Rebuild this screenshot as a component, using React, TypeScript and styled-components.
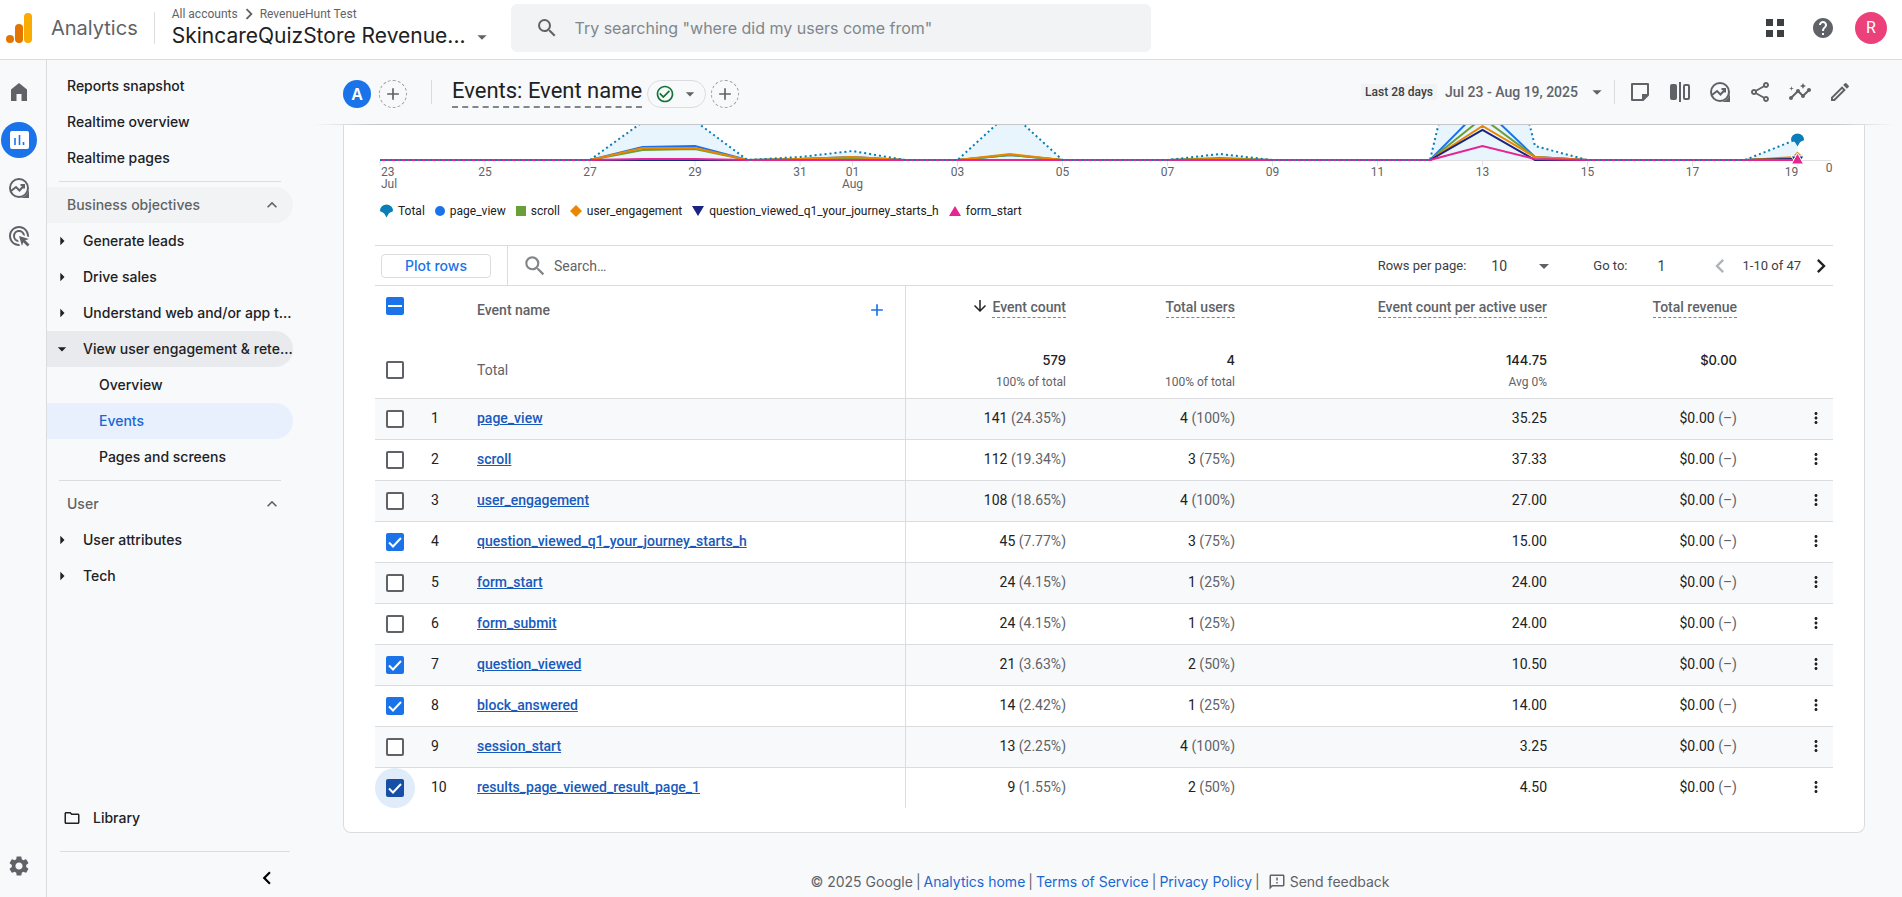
import React, { useId, useState } from 'react';
import styled, { createGlobalStyle, css } from 'styled-components';
import {
  MdAdd,
  MdAdsClick,
  MdArrowDownward,
  MdArrowDropDown,
  MdArrowRight,
  MdCheckCircleOutline,
  MdChevronLeft,
  MdChevronRight,
  MdExpandLess,
  MdHelp,
  MdInsights,
  MdMoreVert,
  MdOutlineFeedback,
  MdOutlineFolder,
  MdOutlineModeEdit,
  MdOutlineShare,
  MdSearch,
  MdSettings,
} from 'react-icons/md';

const ink = '#202124';
const grey = '#5f6368';
const line = '#dadce0';
const blue = '#1a73e8';
const surface = '#f8f9fb';
const display = `Inter, "Liberation Sans", sans-serif`;

const GlobalStyle = createGlobalStyle`
  *, *::before, *::after { box-sizing: border-box; }
  body {
    margin: 0;
    background: ${surface};
    color: ${ink};
    font: 400 14px/20px Roboto, "Liberation Sans", sans-serif;
  }
  button, input, select { font: inherit; color: inherit; }
  svg { display: block; flex: none; }
`;

const plainButton = css`
  display: flex;
  align-items: center;
  padding: 0;
  border: 0;
  background: none;
  cursor: pointer;
`;

/* ---------- Top bar ---------- */

const TopBar = styled.header`
  display: flex;
  align-items: center;
  height: 60px;
  padding: 0 15px 4px 6px;
  background: #fff;
  border-bottom: 1px solid ${line};
`;

const ProductName = styled.span`
  margin: 0 16px 0 19px;
  color: ${grey};
  font: 400 20px/28px ${display};
`;

const Rule = styled.span`
  flex: none;
  width: 1px;
  height: ${(p: { $tall?: boolean }) => (p.$tall ? '32px' : '24px')};
  background: ${line};
`;

const AccountPicker = styled.button`
  ${plainButton}
  flex: none;
  gap: 6px;
  margin: 0 18px 0 17px;
  text-align: left;
`;

const AccountText = styled.span`
  display: flex;
  flex-direction: column;
`;

const Crumbs = styled.span`
  display: flex;
  align-items: center;
  height: 16px;
  color: ${grey};
  font-size: 12px;
  line-height: 16px;
`;

const AccountName = styled.span`
  font: 400 21px/28px ${display};
  white-space: nowrap;
`;

const CaretSlot = styled.span`
  align-self: flex-end;
  padding-bottom: 2px;
  color: ${grey};
`;

const GlobalSearch = styled.label`
  display: flex;
  flex: 0 1 640px;
  align-items: center;
  gap: 15px;
  height: 48px;
  padding: 0 24px;
  border-radius: 6px;
  background: #f1f3f4;
  color: ${grey};
`;

const SearchInput = styled.input`
  flex: 1;
  min-width: 0;
  padding: 0;
  border: 0;
  outline: 0;
  background: none;
  font: 400 16px/24px ${display};
  &::placeholder { color: #80868b; opacity: 1; }
`;

const TopActions = styled.div`
  display: flex;
  align-items: center;
  gap: 24px;
  margin-left: auto;
  color: ${grey};
`;

const IconButton = styled.button`
  ${plainButton}
  justify-content: center;
  min-width: 24px;
  height: 24px;
  color: ${grey};
`;

const Avatar = styled.button`
  ${plainButton}
  justify-content: center;
  width: 32px;
  height: 32px;
  margin-left: -4px;
  border-radius: 50%;
  background: #ec407a;
  color: #fff;
  font-size: 16px;
`;

/* ---------- Shell ---------- */

const Shell = styled.div`
  display: flex;
  min-height: calc(100vh - 60px);
`;

const Rail = styled.nav`
  display: flex;
  flex: none;
  flex-direction: column;
  align-items: center;
  gap: 12px;
  width: 47px;
  padding: 14px 8px 13px 0;
  border-right: 1px solid ${line};
`;

const RailLink = styled.a<{ $active?: boolean; $last?: boolean }>`
  display: flex;
  align-items: center;
  justify-content: center;
  width: 36px;
  height: 36px;
  margin-top: ${(p) => (p.$last ? 'auto' : '0')};
  border-radius: 50%;
  background: ${(p) => (p.$active ? blue : 'transparent')};
  color: ${grey};
`;

const SideNav = styled.nav`
  display: flex;
  flex: none;
  flex-direction: column;
  width: 266px;
  padding: 8px 20px 7px 0;
  font-family: ${display};
  font-weight: 450;
`;

const NavLink = styled.a<{ $level: number; $tone?: 'open' | 'selected' }>`
  display: flex;
  align-items: center;
  height: 36px;
  padding-left: ${(p) => [20, 5, 52][p.$level]}px;
  border-radius: 0 18px 18px 0;
  background: ${(p) => (p.$tone === 'open' ? '#e8eaed' : p.$tone === 'selected' ? '#e8f0fe' : 'transparent')};
  color: ${(p) => (p.$tone === 'selected' ? '#1967d2' : ink)};
  text-decoration: none;
  white-space: nowrap;
  & > svg { margin-right: 11px; }
`;

const NavSection = styled.button<{ $hover?: boolean }>`
  ${plainButton}
  justify-content: space-between;
  height: 36px;
  padding: 0 11px 0 20px;
  border-radius: 0 18px 18px 0;
  background: ${(p) => (p.$hover ? '#f1f3f4' : 'transparent')};
  color: ${grey};
  font-weight: 450;
`;

const NavRule = styled.hr`
  width: 222px;
  height: 1px;
  margin: 5px 0 5px 12px;
  border: 0;
  background: ${line};
`;

const LibraryLink = styled.a`
  display: flex;
  align-items: center;
  gap: 12px;
  height: 36px;
  margin-top: auto;
  padding-left: 16px;
  color: ${ink};
  text-decoration: none;
`;

const BottomRule = styled.hr`
  width: 230px;
  height: 1px;
  margin: 15px 0 14px 13px;
  border: 0;
  background: ${line};
`;

const CollapseButton = styled(IconButton)`
  align-self: flex-end;
  margin-right: 13px;
  color: #000;
`;

const Main = styled.main`
  flex: 1;
  min-width: 0;
`;

/* ---------- Report header ---------- */

const ReportHeader = styled.div`
  display: flex;
  align-items: flex-start;
  height: 64px;
  padding: 20px 50px 0 30px;
`;

const HeaderEdge = styled.div`
  height: 1px;
  margin-right: 7px;
  background: linear-gradient(to right, transparent, #c4c6c9 60px, #c4c6c9 calc(100% - 60px), transparent);
`;

const Segment = styled.button`
  ${plainButton}
  justify-content: center;
  width: 28px;
  height: 28px;
  border-radius: 50%;
  background: ${blue};
  color: #fff;
  font: 600 16px/28px ${display};
`;

const AddButton = styled.button`
  ${plainButton}
  flex: none;
  justify-content: center;
  width: 28px;
  height: 28px;
  border: 1px dashed #9aa0a6;
  border-radius: 50%;
  color: ${grey};
`;

const SegmentGroup = styled.div`
  display: flex;
  gap: 8px;
  margin-right: 24px;
`;

const ReportTitle = styled.h1`
  margin: 0 5px 0 20px;
  padding-bottom: 4px;
  border-bottom: 2px dashed #80868b;
  font-size: 22px;
  font-weight: 400;
  line-height: 22px;
  white-space: nowrap;
`;

const StatusPill = styled.button`
  ${plainButton}
  gap: 5px;
  width: 59px;
  height: 28px;
  margin-right: 5px;
  padding-left: 7px;
  border: 1px solid ${line};
  border-radius: 14px;
  color: ${grey};
`;

const ReportTools = styled.div`
  display: flex;
  align-items: center;
  gap: 16px;
  height: 24px;
  margin-left: auto;
`;

const DatePicker = styled.button`
  ${plainButton}
  gap: 8px;
  margin-right: -10px;
  color: ${grey};
  font-weight: 500;
`;

const DatePreset = styled.span`
  padding: 0 4px;
  background: #f1f3f4;
  color: #3c4043;
  font-size: 12px;
  line-height: 16px;
`;

const ToolRule = styled(Rule)`
  margin-right: -3px;
`;

/* ---------- Card, chart, legend ---------- */

const Card = styled.section`
  margin: 0 37px 0 30px;
  padding: 0 31px 24px;
  border: 1px solid ${line};
  border-top: 0;
  border-radius: 0 0 8px 8px;
  background: #fff;
`;

const ChartSvg = styled.svg`
  width: 100%;
  height: auto;
  font-size: 12px;
`;

const Legend = styled.ul`
  display: flex;
  flex-wrap: wrap;
  gap: 4px 10px;
  margin: 11px 0 26px 5px;
  padding: 0;
  list-style: none;
  font-size: 12px;
  line-height: 16px;
`;

const LegendItem = styled.li`
  display: flex;
  align-items: center;
  gap: 5px;
`;

/* ---------- Table ---------- */

const TableBar = styled.div`
  display: flex;
  align-items: center;
  height: 41px;
  border-top: 1px solid ${line};
  border-bottom: 1px solid ${line};
`;

const PlotButton = styled.button`
  width: 110px;
  height: 24px;
  margin: 0 16px 0 6px;
  padding: 0;
  border: 1px solid ${line};
  border-radius: 4px;
  background: #fff;
  color: ${blue};
  font: 500 14px/22px ${display};
  cursor: pointer;
`;

const BarRule = styled.span`
  width: 1px;
  height: 39px;
  background: ${line};
`;

const TableSearch = styled.label`
  display: flex;
  flex: 1;
  align-items: center;
  gap: 6px;
  padding-left: 14px;
  color: #80868b;
`;

const TableSearchInput = styled(SearchInput)`
  font: 400 14px/20px Roboto, "Liberation Sans", sans-serif;
  &::placeholder { color: ${grey}; }
`;

const PagerLabel = styled.label`
  display: flex;
  align-items: center;
  color: #3c4043;
  font-size: 13px;
`;

const SelectWrap = styled.span`
  display: flex;
  align-items: center;
  margin: 0 37px 0 25px;
  color: ${grey};
`;

const PageSize = styled.select`
  width: 41px;
  padding: 0;
  border: 0;
  background: none;
  color: #3c4043;
  font-size: 14px;
  appearance: none;
`;

const GoToInput = styled.input`
  width: 49px;
  margin-left: 30px;
  padding: 0;
  border: 0;
  background: none;
  font-size: 14px;
`;

const PagerRange = styled.span`
  margin: 0 6px 0 8px;
  color: #3c4043;
  font-size: 13px;
`;

const PagerButton = styled(IconButton)<{ $off?: boolean }>`
  color: ${(p) => (p.$off ? '#b0b3b8' : ink)};
  &:last-child { margin-right: -2px; }
`;

const Table = styled.table`
  width: 100%;
  border-spacing: 0;
  table-layout: fixed;
`;

const HeadRow = styled.tr`
  height: 56px;
`;

const HeadCell = styled.th<{ $low?: boolean; $edge?: boolean }>`
  padding: ${(p) => (p.$low ? '14px' : '11px')} 0 0;
  border-right: ${(p) => (p.$edge ? `1px solid ${line}` : '0')};
  color: ${grey};
  font-weight: 500;
  text-align: left;
  vertical-align: top;
`;

const DimensionHead = styled.div`
  display: flex;
  justify-content: space-between;
  padding-right: 16px;
  & button { height: 20px; color: ${blue}; }
`;

const MetricHead = styled.div`
  display: flex;
  justify-content: flex-end;
  gap: 3px;
`;

const MetricButton = styled.button`
  ${plainButton}
  border-bottom: 1px dashed #80868b;
  font-weight: 500;
  white-space: nowrap;
`;

const TotalRow = styled.tr`
  height: 56px;
`;

const TotalCell = styled.td`
  padding: 8px 0 0;
  font: 500 13px/20px ${display};
  text-align: right;
  vertical-align: top;
`;

const TotalNote = styled.div`
  color: ${grey};
  font: 400 12px/24px Roboto, "Liberation Sans", sans-serif;
`;

const BodyRow = styled.tr<{ $shaded: boolean }>`
  height: 41px;
  background: ${(p) => (p.$shaded ? surface : '#fff')};
  & > td { border-top: 1px solid ${line}; }
  & > td + td { padding-bottom: 2px; }
`;

const Cell = styled.td<{ $right?: boolean; $edge?: boolean }>`
  padding: 0;
  border-right: ${(p) => (p.$edge ? `1px solid ${line}` : '0')};
  text-align: ${(p) => (p.$right ? 'right' : 'left')};
  white-space: nowrap;
`;

const Muted = styled.span`
  color: ${grey};
`;

const EventLink = styled.a`
  color: #185abc;
  font-weight: 500;
  text-decoration: underline;
`;

const MenuButton = styled(IconButton)`
  margin-left: 67px;
  color: ${ink};
`;

const CheckWrap = styled.label<{ $focus?: boolean }>`
  position: relative;
  display: block;
  width: 18px;
  height: 18px;
  margin-left: 11px;
  color: #fff;
  &::before {
    content: '';
    position: absolute;
    inset: -11px;
    border-radius: 50%;
    background: ${(p) => (p.$focus ? '#e1ecfb' : 'transparent')};
  }
  & > svg { position: absolute; inset: 0; pointer-events: none; }
`;

const CheckInput = styled.input<{ $fill: boolean; $focus?: boolean }>`
  position: relative;
  display: block;
  width: 18px;
  height: 18px;
  margin: 0;
  border: ${(p) => (p.$fill ? '0' : `2px solid ${grey}`)};
  border-radius: 2px;
  background: ${(p) => (p.$fill ? (p.$focus ? '#174ea6' : blue) : '#fff')};
  appearance: none;
`;

const Footer = styled.footer`
  display: flex;
  align-items: center;
  justify-content: center;
  gap: 3px;
  padding: 39px 45px 5px 30px;
  color: ${grey};
  font: 400 14px/20px ${display};
`;

const FooterLink = styled.a`
  color: #1967d2;
  text-decoration: none;
`;

const FeedbackButton = styled.button`
  ${plainButton}
  gap: 4px;
  margin-left: 5px;
  color: ${grey};
`;

/* ---------- Icons ---------- */

const AnalyticsLogo = () => (
  <svg width="26" height="30" viewBox="0 0 26 30" aria-hidden="true">
    <rect x="18" y="0" width="8" height="30" rx="4" fill="#f9ab00" />
    <rect x="9" y="11" width="8" height="19" rx="4" fill="#e37400" />
    <circle cx="4" cy="26" r="4" fill="#e37400" />
  </svg>
);

const HomeIcon = () => (
  <svg width="24" height="24" viewBox="0 0 24 24" aria-hidden="true">
    <path d="M4 21V9.5L12 3l8 6.500V21h-5.500v-7h-5v7z" fill="currentColor" />
  </svg>
);

const ReportsIcon = () => (
  <svg width="24" height="24" viewBox="0 0 24 24" aria-hidden="true">
    <rect x="3" y="3" width="19" height="18" rx="2" fill="#fff" />
    <path d="M8 10v7M12.500 7v10M16.500 14v3" stroke={blue} strokeWidth="1.600" />
  </svg>
);

const ExploreIcon = () => (
  <svg width="24" height="24" viewBox="0 0 24 24" fill="none" stroke="currentColor" strokeWidth="2" aria-hidden="true">
    <circle cx="12" cy="12" r="9" />
    <path d="M22 12v10H12c5.500 0 10-4.500 10-10z" fill="currentColor" stroke="none" />
    <path d="M4 15l5-4 3.500 3.500L17 9.500M13.500 9H17v3.500" />
  </svg>
);

const AppsIcon = () => (
  <svg width="24" height="24" viewBox="0 0 24 24" fill="#3c4043" aria-hidden="true">
    <path d="M3 3h7v7H3zM14 3h7v7h-7zM3 14h7v7H3zM14 14h7v7h-7z" />
  </svg>
);

const NoteIcon = () => (
  <svg width="24" height="24" viewBox="0 0 24 24" aria-hidden="true">
    <path d="M4 4h16v11l-5 5H4z" fill="none" stroke="currentColor" strokeWidth="2" strokeLinejoin="round" />
    <path d="M14 21v-7h7z" fill="currentColor" />
  </svg>
);

const CompareIcon = () => (
  <svg width="24" height="24" viewBox="0 0 24 24" aria-hidden="true">
    <rect x="2" y="4" width="7" height="16" rx="2" fill="currentColor" />
    <path d="M12 2v20" stroke="currentColor" strokeWidth="2" />
    <rect x="16" y="5" width="5" height="14" rx="1" fill="none" stroke="currentColor" strokeWidth="2" />
  </svg>
);

const CheckMark = () => (
  <svg width="18" height="18" viewBox="0 0 18 18" aria-hidden="true">
    <path d="M3 9.500l4 4L15 5" fill="none" stroke="currentColor" strokeWidth="2" />
  </svg>
);

const DashMark = () => (
  <svg width="18" height="18" viewBox="0 0 18 18" aria-hidden="true">
    <path d="M2 9h14" stroke="currentColor" strokeWidth="2" />
  </svg>
);

const totalShape = 'M0 6.500A6.500 6 0 0 1 13 6.500C13 8.500 10 7.500 8.500 10L6.500 13.500L4.500 10C3 7.500 0 8.500 0 6.500z';

type Marker = 'total' | 'circle' | 'square' | 'diamond' | 'down' | 'up';

const LegendMarker = ({ kind }: { kind: Marker }) => (
  <svg width={{ total: 13, circle: 10, square: 10, diamond: 12, down: 12, up: 12 }[kind]} height="14" aria-hidden="true">
    {kind === 'total' && <path d={totalShape} fill="#0b7db8" />}
    {kind === 'circle' && <circle cx="5" cy="7" r="5" fill={blue} />}
    {kind === 'square' && <rect y="2" width="10" height="10" fill="#689f38" />}
    {kind === 'diamond' && <path d="M6 1l6 6-6 6-6-6z" fill="#ea8600" />}
    {kind === 'down' && <path d="M0 2h12L6 12z" fill="#1a237e" />}
    {kind === 'up' && <path d="M6 2l6 10H0z" fill="#e52592" />}
  </svg>
);

/* ---------- Data ---------- */

const DAY = 52.5;
const START = 5;
const BASE = 35;

/* Heights above the zero line, keyed by days since Jul 23. */
const series: { color: string; points: Record<number, number> }[] = [
  { color: blue, points: { 5: 13, 6: 14, 8: 1, 9: 3, 12: 5, 16: 1, 21: 53, 22: 3, 27: 2 } },
  { color: '#689f38', points: { 5: 10, 6: 11, 8: 1, 9: 2, 12: 5, 16: 2, 21: 42, 22: 3, 27: 2 } },
  { color: '#ea8600', points: { 5: 12, 6: 12, 8: 1, 9: 3, 12: 6, 16: 1, 21: 34, 22: 3, 27: 3 } },
  { color: '#1a237e', points: { 21: 30, 27: 1 } },
  { color: '#e52592', points: { 5: 1, 6: 1, 21: 14, 22: 1 } },
];
const totals: Record<number, number> = { 5: 38, 6: 39, 8: 3, 9: 9, 12: 48, 16: 6, 21: 220, 22: 14, 27: 21 };

const toPoints = (p: Record<number, number>) =>
  Array.from({ length: 28 }, (_, i) => `${START + i * DAY},${BASE - (p[i] ?? 0)}`).join(' ');

const ticks: [number, string, string?][] = [
  [0, '23', 'Jul'], [2, '25'], [4, '27'], [6, '29'], [8, '31'], [9, '01', 'Aug'], [11, '03'], [13, '05'],
  [15, '07'], [17, '09'], [19, '11'], [21, '13'], [23, '15'], [25, '17'], [27, '19'],
];

const legend: [Marker, string][] = [
  ['total', 'Total'],
  ['circle', 'page_view'],
  ['square', 'scroll'],
  ['diamond', 'user_engagement'],
  ['down', 'question_viewed_q1_your_journey_starts_h'],
  ['up', 'form_start'],
];

const rows: [string, string, string, string, string, string][] = [
  ['page_view', '141', '24.35%', '4', '100%', '35.25'],
  ['scroll', '112', '19.34%', '3', '75%', '37.33'],
  ['user_engagement', '108', '18.65%', '4', '100%', '27.00'],
  ['question_viewed_q1_your_journey_starts_h', '45', '7.77%', '3', '75%', '15.00'],
  ['form_start', '24', '4.15%', '1', '25%', '24.00'],
  ['form_submit', '24', '4.15%', '1', '25%', '24.00'],
  ['question_viewed', '21', '3.63%', '2', '50%', '10.50'],
  ['block_answered', '14', '2.42%', '1', '25%', '14.00'],
  ['session_start', '13', '2.25%', '4', '100%', '3.25'],
  ['results_page_viewed_result_page_1', '9', '1.55%', '2', '50%', '4.50'],
];

const columnWidths = [56, 46, 429, 160, 169, 312, 190, 96];

/* ---------- Pieces ---------- */

const Checkbox = (p: { label: string; on?: boolean; mixed?: boolean; focus?: boolean; onToggle?: () => void }) => (
  <CheckWrap $focus={p.focus}>
    <CheckInput
      type="checkbox"
      aria-label={p.label}
      checked={!!p.on}
      onChange={() => p.onToggle?.()}
      $fill={!!(p.on || p.mixed)}
      $focus={p.focus}
    />
    {p.mixed ? <DashMark /> : p.on ? <CheckMark /> : null}
  </CheckWrap>
);

const TrendChart = () => (
  <ChartSvg viewBox="0 0 1458 67" role="img" aria-label="Event count by event name over time">
    <path d="M5 35.500H1456" stroke="#e0e0e0" />
    <polygon points={`${START},${BASE} ${toPoints(totals)} ${START + 27 * DAY},${BASE}`} fill="#e8f5fd" />
    {ticks.map(([day]) => (
      <path key={day} d={`M${START + day * DAY} 36v5`} stroke="#e0e0e0" />
    ))}
    {series.map((s) => (
      <polyline key={s.color} points={toPoints(s.points)} fill="none" stroke={s.color} strokeWidth="2" />
    ))}
    <polyline points={toPoints(totals)} fill="none" stroke="#0b7db8" strokeWidth="2" strokeDasharray="2 3" />
    <g transform="translate(1416 8)"><path d={totalShape} fill="#0b7db8" /></g>
    <path d="M1422.500 26l6 6-6 6-6-6z" fill="#ea8600" stroke="#fff" />
    <path d="M1416 31h13l-6.500 9z" fill="#1a237e" stroke="#fff" />
    <path d="M1422.500 28l6 11h-12z" fill="#e52592" stroke="#fff" />
    <g fill={grey} textAnchor="middle">
      {ticks.map(([day, label, month]) => {
        const x = day === 0 ? START + 1 : START + day * DAY - (day === 27 ? 6 : 0);
        return (
          <text key={day} x={x} y="51" textAnchor={day === 0 ? 'start' : 'middle'}>
            {label}
            {month && <tspan x={x} y="63">{month}</tspan>}
          </text>
        );
      })}
      <text x="1454" y="47">0</text>
    </g>
  </ChartSvg>
);

const NavCaret = ({ open }: { open?: boolean }) => (open ? <MdArrowDropDown size={20} /> : <MdArrowRight size={20} />);

export default function App() {
  const [checked, setChecked] = useState<number[]>([3, 6, 7, 9]);
  const [goTo, setGoTo] = useState('1');
  const sizeId = useId();
  const toggle = (i: number) =>
    setChecked((c) => (c.includes(i) ? c.filter((n) => n !== i) : [...c, i]));

  return (
    <>
      <GlobalStyle />
      <TopBar>
        <AnalyticsLogo />
        <ProductName>Analytics</ProductName>
        <Rule $tall />
        <AccountPicker>
          <AccountText>
            <Crumbs>
              All accounts <MdChevronRight size={22} /> RevenueHunt Test
            </Crumbs>
            <AccountName>SkincareQuizStore Revenue...</AccountName>
          </AccountText>
          <CaretSlot><MdArrowDropDown size={22} /></CaretSlot>
        </AccountPicker>
        <GlobalSearch>
          <MdSearch size={24} />
          <SearchInput
            type="text"
            aria-label="Search Analytics"
            placeholder={'Try searching "where did my users come from"'}
          />
        </GlobalSearch>
        <TopActions>
          <IconButton aria-label="Apps"><AppsIcon /></IconButton>
          <IconButton aria-label="Help"><MdHelp size={24} /></IconButton>
          <Avatar aria-label="Account">R</Avatar>
        </TopActions>
      </TopBar>

      <Shell>
        <Rail aria-label="Product areas">
          <RailLink href="#home" aria-label="Home"><HomeIcon /></RailLink>
          <RailLink href="#reports" aria-label="Reports" $active><ReportsIcon /></RailLink>
          <RailLink href="#explore" aria-label="Explore"><ExploreIcon /></RailLink>
          <RailLink href="#advertising" aria-label="Advertising"><MdAdsClick size={24} /></RailLink>
          <RailLink href="#admin" aria-label="Admin" $last><MdSettings size={24} /></RailLink>
        </Rail>

        <SideNav aria-label="Reports">
          <NavLink href="#snapshot" $level={0}>Reports snapshot</NavLink>
          <NavLink href="#realtime" $level={0}>Realtime overview</NavLink>
          <NavLink href="#realtime-pages" $level={0}>Realtime pages</NavLink>
          <NavRule />
          <NavSection $hover>Business objectives <MdExpandLess size={20} /></NavSection>
          <NavLink href="#leads" $level={1}><NavCaret />Generate leads</NavLink>
          <NavLink href="#sales" $level={1}><NavCaret />Drive sales</NavLink>
          <NavLink href="#traffic" $level={1}><NavCaret />Understand web and/or app t...</NavLink>
          <NavLink href="#engagement" $level={1} $tone="open"><NavCaret open />View user engagement &amp; rete...</NavLink>
          <NavLink href="#overview" $level={2}>Overview</NavLink>
          <NavLink href="#events" $level={2} $tone="selected">Events</NavLink>
          <NavLink href="#pages" $level={2}>Pages and screens</NavLink>
          <NavRule />
          <NavSection>User <MdExpandLess size={20} /></NavSection>
          <NavLink href="#attributes" $level={1}><NavCaret />User attributes</NavLink>
          <NavLink href="#tech" $level={1}><NavCaret />Tech</NavLink>
          <LibraryLink href="#library"><MdOutlineFolder size={18} />Library</LibraryLink>
          <BottomRule />
          <CollapseButton aria-label="Collapse navigation"><MdChevronLeft size={26} /></CollapseButton>
        </SideNav>

        <Main>
          <ReportHeader>
            <SegmentGroup>
              <Segment>A</Segment>
              <AddButton aria-label="Add comparison"><MdAdd size={20} /></AddButton>
            </SegmentGroup>
            <Rule />
            <ReportTitle>Events: Event name</ReportTitle>
            <StatusPill aria-label="Report status">
              <MdCheckCircleOutline size={20} color="#137333" />
              <MdArrowDropDown size={20} />
            </StatusPill>
            <AddButton aria-label="Add filter"><MdAdd size={20} /></AddButton>
            <ReportTools>
              <DatePicker>
                <DatePreset>Last 28 days</DatePreset>
                Jul 23 - Aug 19, 2025
                <MdArrowDropDown size={22} />
              </DatePicker>
              <ToolRule />
              <IconButton aria-label="Notes"><NoteIcon /></IconButton>
              <IconButton aria-label="Compare"><CompareIcon /></IconButton>
              <IconButton aria-label="Explore data"><ExploreIcon /></IconButton>
              <IconButton aria-label="Share"><MdOutlineShare size={24} /></IconButton>
              <IconButton aria-label="Insights"><MdInsights size={24} /></IconButton>
              <IconButton aria-label="Edit report"><MdOutlineModeEdit size={24} /></IconButton>
            </ReportTools>
          </ReportHeader>
          <HeaderEdge />

          <Card>
            <TrendChart />
            <Legend>
              {legend.map(([kind, label]) => (
                <LegendItem key={label}><LegendMarker kind={kind} />{label}</LegendItem>
              ))}
            </Legend>

            <TableBar>
              <PlotButton>Plot rows</PlotButton>
              <BarRule />
              <TableSearch>
                <MdSearch size={26} />
                <TableSearchInput type="text" aria-label="Search rows" placeholder="Search…" />
              </TableSearch>
              <PagerLabel htmlFor={sizeId}>Rows per page:</PagerLabel>
              <SelectWrap>
                <PageSize id={sizeId} defaultValue="10">
                  <option>10</option>
                  <option>25</option>
                  <option>50</option>
                </PageSize>
                <MdArrowDropDown size={24} />
              </SelectWrap>
              <PagerLabel>
                Go to:
                <GoToInput value={goTo} onChange={(e) => setGoTo(e.target.value)} />
              </PagerLabel>
              <PagerButton aria-label="Previous page" $off><MdChevronLeft size={28} /></PagerButton>
              <PagerRange>1-10 of 47</PagerRange>
              <PagerButton aria-label="Next page"><MdChevronRight size={28} /></PagerButton>
            </TableBar>

            <Table>
              <colgroup>
                {columnWidths.map((w, i) => <col key={i} width={w} />)}
              </colgroup>
              <thead>
                <HeadRow>
                  <HeadCell><Checkbox label="Select all rows" mixed={checked.length > 0} /></HeadCell>
                  <HeadCell />
                  <HeadCell $low $edge>
                    <DimensionHead>
                      Event name
                      <IconButton aria-label="Add dimension"><MdAdd size={20} /></IconButton>
                    </DimensionHead>
                  </HeadCell>
                  <HeadCell>
                    <MetricHead>
                      <MdArrowDownward size={18} color={ink} />
                      <MetricButton>Event count</MetricButton>
                    </MetricHead>
                  </HeadCell>
                  <HeadCell><MetricHead><MetricButton>Total users</MetricButton></MetricHead></HeadCell>
                  <HeadCell><MetricHead><MetricButton>Event count per active user</MetricButton></MetricHead></HeadCell>
                  <HeadCell><MetricHead><MetricButton>Total revenue</MetricButton></MetricHead></HeadCell>
                  <HeadCell />
                </HeadRow>
              </thead>
              <tbody>
                <TotalRow>
                  <Cell><Checkbox label="Plot total" /></Cell>
                  <Cell />
                  <Cell $edge><Muted>Total</Muted></Cell>
                  <TotalCell>579<TotalNote>100% of total</TotalNote></TotalCell>
                  <TotalCell>4<TotalNote>100% of total</TotalNote></TotalCell>
                  <TotalCell>144.75<TotalNote>Avg 0%</TotalNote></TotalCell>
                  <TotalCell>$0.00</TotalCell>
                  <Cell />
                </TotalRow>
                {rows.map(([name, count, countShare, users, userShare, perUser], i) => (
                  <BodyRow key={name} $shaded={i % 2 === 0}>
                    <Cell>
                      <Checkbox
                        label={`Select ${name}`}
                        on={checked.includes(i)}
                        focus={i === 9}
                        onToggle={() => toggle(i)}
                      />
                    </Cell>
                    <Cell>{i + 1}</Cell>
                    <Cell $edge><EventLink href={`#${name}`}>{name}</EventLink></Cell>
                    <Cell $right>{count} <Muted>({countShare})</Muted></Cell>
                    <Cell $right>{users} <Muted>({userShare})</Muted></Cell>
                    <Cell $right>{perUser}</Cell>
                    <Cell $right>$0.00 <Muted>(–)</Muted></Cell>
                    <Cell><MenuButton aria-label={`Options for ${name}`}><MdMoreVert size={18} /></MenuButton></Cell>
                  </BodyRow>
                ))}
              </tbody>
            </Table>
          </Card>

          <Footer>
            <span>© 2025 Google</span>|
            <FooterLink href="#analytics-home">Analytics home</FooterLink>|
            <FooterLink href="#terms">Terms of Service</FooterLink>|
            <FooterLink href="#privacy">Privacy Policy</FooterLink>|
            <FeedbackButton><MdOutlineFeedback size={18} />Send feedback</FeedbackButton>
          </Footer>
        </Main>
      </Shell>
    </>
  );
}
